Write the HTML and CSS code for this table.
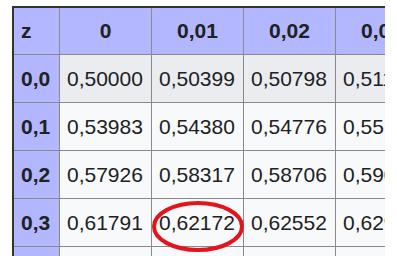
FILE: index.html
```html
<!DOCTYPE html>
<html>
<head>
<meta charset="utf-8">
<link rel="stylesheet" href="styles.css">
</head>
<body>
<div class="frame">
  <table class="ztable">
    <colgroup>
      <col class="c-z"><col class="c-d"><col class="c-d"><col class="c-d"><col class="c-d">
    </colgroup>
    <thead>
      <tr><th class="zh">z</th><th>0</th><th>0,01</th><th>0,02</th><th>0,03</th></tr>
    </thead>
    <tbody>
      <tr class="hl"><th>0,0</th><td>0,50000</td><td>0,50399</td><td>0,50798</td><td>0,51197</td></tr>
      <tr><th>0,1</th><td>0,53983</td><td>0,54380</td><td>0,54776</td><td>0,55172</td></tr>
      <tr><th>0,2</th><td>0,57926</td><td>0,58317</td><td>0,58706</td><td>0,59095</td></tr>
      <tr><th>0,3</th><td>0,61791</td><td>0,62172</td><td>0,62552</td><td>0,62930</td></tr>
      <tr><th>0,4</th><td>0,65542</td><td>0,65910</td><td>0,66276</td><td>0,66640</td></tr>
    </tbody>
  </table>
  <svg class="circle" width="92" height="51" viewBox="0 0 92 51" aria-hidden="true">
    <ellipse cx="46" cy="25.5" rx="44" ry="23.5" fill="none" stroke="#e3141c" stroke-width="4"/>
  </svg>
</div>
</body>
</html>
```
FILE: styles.css
```css
html, body {
  margin: 0;
  padding: 0;
  background: #ffffff;
}
body {
  height: 256px;
  overflow: hidden;
}
.frame {
  position: relative;
  margin: 6px 0 0 12px;
  width: 373px;
  height: 250px;
  overflow: hidden;
}
.ztable {
  border-collapse: separate;
  border-spacing: 0;
  table-layout: fixed;
  width: 416px;
  border-top: 2px solid #333333;
  border-left: 2px solid #333333;
  font-family: "Liberation Sans", Arial, sans-serif;
  font-size: 21px;
  color: #202122;
}
.c-z { width: 46px; }
.c-d { width: 92px; }
.ztable th,
.ztable td {
  padding: 0;
  border-right: 1px solid #8a8a8a;
  border-bottom: 1px solid #8a8a8a;
  white-space: nowrap;
  overflow: hidden;
}
.ztable thead th {
  height: 46px;
  background: #b3b7ff;
  font-weight: bold;
  text-align: center;
}
.ztable thead th.zh {
  text-align: left;
  padding-left: 7px;
}
.ztable tbody th {
  height: 47px;
  background: #b3b7ff;
  font-weight: bold;
  text-align: left;
  padding-left: 7px;
}
.ztable tbody td {
  height: 47px;
  background: #f8f9fa;
  text-align: left;
  padding-left: 7px;
}
.ztable tbody tr.hl td {
  background: #eaecf0;
}
.circle {
  position: absolute;
  left: 140px;
  top: 195px;
}
```
